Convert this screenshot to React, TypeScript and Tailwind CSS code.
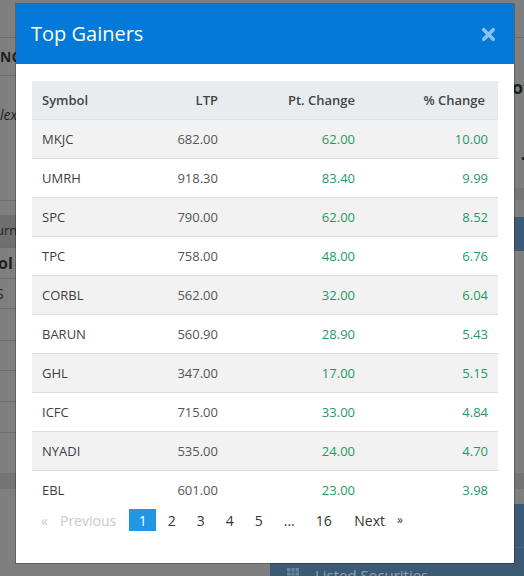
import { X } from "lucide-react";

type Row = { symbol: string; ltp: string; pt: string; pct: string };

const rows: Row[] = [
  { symbol: "MKJC", ltp: "682.00", pt: "62.00", pct: "10.00" },
  { symbol: "UMRH", ltp: "918.30", pt: "83.40", pct: "9.99" },
  { symbol: "SPC", ltp: "790.00", pt: "62.00", pct: "8.52" },
  { symbol: "TPC", ltp: "758.00", pt: "48.00", pct: "6.76" },
  { symbol: "CORBL", ltp: "562.00", pt: "32.00", pct: "6.04" },
  { symbol: "BARUN", ltp: "560.90", pt: "28.90", pct: "5.43" },
  { symbol: "GHL", ltp: "347.00", pt: "17.00", pct: "5.15" },
  { symbol: "ICFC", ltp: "715.00", pt: "33.00", pct: "4.84" },
  { symbol: "NYADI", ltp: "535.00", pt: "24.00", pct: "4.70" },
  { symbol: "EBL", ltp: "601.00", pt: "23.00", pct: "3.98" },
];

const pages = ["1", "2", "3", "4", "5", "...", "16"];

// dimmed page that sits behind the modal
const Backdrop = () => (
  <div className="flex h-[576px] w-[524px] overflow-hidden bg-[#7f7f7f] text-[#1f1f1f]">
    <div className="flex w-[270px] shrink-0 flex-col">
      <div className="h-[38px] shrink-0 border-b border-[#6c6c6c]" />
      <div className="flex h-[38px] shrink-0 items-center border-b border-[#6c6c6c] text-[14px] font-bold">
        NCIL Index
      </div>
      <div className="flex h-[52px] shrink-0 items-end pb-[3px] text-[14px] italic">lex.</div>
      <div className="h-[72px] shrink-0" />
      <div className="h-[15px] shrink-0 border-t border-[#6c6c6c]" />
      <div className="flex h-[32px] shrink-0 items-center bg-[#6f6f6f] text-[13px] -ml-[4px]">urnover</div>
      <div className="flex h-[32px] shrink-0 items-center border-y border-[#6c6c6c] text-[16px] font-bold -ml-[2px]">
        ol
      </div>
      <div className="flex h-[30px] shrink-0 items-center border-b border-[#6c6c6c] text-[14px] -ml-[4px]">S</div>
      <div className="h-[32px] shrink-0 border-b border-[#6c6c6c]" />
      <div className="h-[30px] shrink-0 border-b border-[#6c6c6c]" />
      <div className="h-[31px] shrink-0 border-b border-[#6c6c6c]" />
      <div className="h-[31px] shrink-0 border-b border-[#6c6c6c]" />
      <div className="h-[40px] shrink-0" />
      <div className="h-[16px] shrink-0 bg-[#747474]" />
      <div className="flex-1" />
    </div>
    <div className="flex flex-1 flex-col">
      <div className="h-[38px] shrink-0 border-b border-[#6c6c6c]" />
      <div className="flex h-[64px] shrink-0 items-end justify-end pb-[1px] text-[18px] font-bold">
        <span className="-mr-[6px]">of</span>
      </div>
      <div className="flex h-[65px] shrink-0 items-end justify-end text-[18px] font-bold">
        <span className="-mr-[2px]">.</span>
      </div>
      <div className="h-[21px] shrink-0" />
      <div className="h-[12px] shrink-0 bg-[#757575]" />
      <div className="h-[17px] shrink-0" />
      <div className="h-[34px] shrink-0 bg-[#3d5a74]" />
      <div className="h-[222px] shrink-0" />
      <div className="h-[16px] shrink-0 bg-[#747474]" />
      <div className="h-[15px] shrink-0" />
      <div className="h-[44px] shrink-0 border-b border-[#4b6680] bg-[#3d5a74]" />
      <div className="flex min-h-0 flex-1 items-start gap-[16px] overflow-hidden bg-[#3d5a74] pl-[17px] pt-[16px] text-[15px] text-[#8fa3b8]">
        <svg width="12" height="12" viewBox="0 0 12 12" className="mt-[4px] shrink-0">
          <rect x="0" y="0" width="12" height="12" fill="#6d849b" />
          <path d="M0 4h12M0 8h12M4 0v12M8 0v12" stroke="#3d5a74" strokeWidth="1" />
        </svg>
        <span className="whitespace-nowrap">Listed Securities</span>
      </div>
    </div>
  </div>
);

export default function App() {
  return (
    <div className="relative h-[576px] w-[524px] overflow-hidden font-['Open_Sans',sans-serif]">
      <Backdrop />
      <div className="absolute left-[16px] top-[4px] flex h-[559px] w-[498px] flex-col bg-white shadow-[0_0_0_1px_rgba(0,0,0,0.25)]">
        <div className="flex h-[60px] shrink-0 items-center justify-between bg-[#0479d7] pl-[15px] pr-[16px]">
          <h2 className="text-[20px] font-normal leading-none text-white">Top Gainers</h2>
          <X size={19} strokeWidth={4.5} className="text-[#8cc2ee]" />
        </div>
        <div className="px-[16px] pt-[17px]">
          <table className="w-[466px] table-fixed border-collapse text-[13px]">
            <colgroup>
              <col className="w-[100px]" />
              <col className="w-[96px]" />
              <col className="w-[137px]" />
              <col className="w-[133px]" />
            </colgroup>
            <thead>
              <tr className="h-[38px] border-b border-[#dcdfe3] bg-[#e9ecef] text-[#444]">
                <th className="pl-[10px] pt-[1px] text-left font-semibold">Symbol</th>
                <th className="pr-[10px] pt-[1px] text-right font-semibold">LTP</th>
                <th className="pr-[10px] pt-[1px] text-right font-semibold">Pt. Change</th>
                <th className="pr-[13px] pt-[1px] text-right font-semibold">% Change</th>
              </tr>
            </thead>
            <tbody>
              {rows.map((r, i) => (
                <tr
                  key={r.symbol}
                  className={
                    (i % 2 === 0 ? "bg-[#f2f2f2] " : "bg-white ") +
                    (i < rows.length - 1 ? "h-[39px] border-b border-[#dddddd]" : "h-[38px]")
                  }
                >
                  <td className="pl-[10px] pt-[2px] text-[#3b3f46]">{r.symbol}</td>
                  <td className="pr-[10px] pt-[2px] text-right text-[#555]">{r.ltp}</td>
                  <td className="pr-[10px] pt-[2px] text-right text-[#1f9a63]">{r.pt}</td>
                  <td className="pr-[10px] pt-[2px] text-right text-[#1f9a63]">{r.pct}</td>
                </tr>
              ))}
            </tbody>
          </table>
          <div className="mt-[1px] flex h-[22px] items-center gap-[2px] text-[14px] text-[#333]">
            <span className="flex h-[22px] items-center pl-[9px] pr-[11px] text-[#c9c9c9]">
              <span className="mr-[12px]">«</span>Previous
            </span>
            {pages.map((p) => (
              <span
                key={p}
                className={
                  p === "1"
                    ? "flex h-[22px] items-center bg-[#2196e3] px-[9.5px] text-white"
                    : "flex h-[22px] items-center px-[9.5px]"
                }
              >
                {p}
              </span>
            ))}
            <span className="flex h-[22px] items-center pl-[11px]">
              Next<span className="ml-[12px] text-[12px]">»</span>
            </span>
          </div>
        </div>
      </div>
    </div>
  );
}
